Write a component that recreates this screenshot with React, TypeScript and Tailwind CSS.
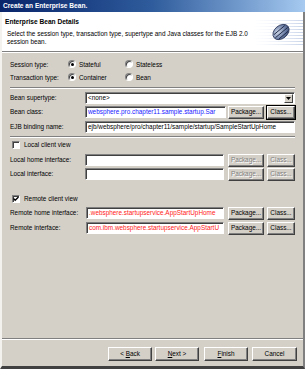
import React from "react";

type BtnProps = {
  children: React.ReactNode;
  className?: string;
  disabled?: boolean;
  focus?: boolean;
};

// classic win2k raised button
const Btn = ({ children, className = "", disabled, focus }: BtnProps) => (
  <div
    className={`flex items-center justify-center whitespace-nowrap bg-[#d4d0c8] border border-t-white border-l-white border-b-[#404040] border-r-[#404040] shadow-[inset_-1px_-1px_0_#808080] ${
      focus ? "outline outline-1 outline-[#000]" : ""
    } ${disabled ? "text-[#808080] [text-shadow:1px_1px_0_#fff]" : "text-black"} ${className}`}
  >
    {children}
  </div>
);

const Field = ({ value, className = "", color = "text-black" }: { value?: string; className?: string; color?: string }) => (
  <div
    className={`h-[12px] bg-white border border-t-[#808080] border-l-[#808080] border-b-white border-r-white shadow-[inset_1px_1px_0_#404040] overflow-hidden whitespace-nowrap leading-[10px] pl-[2px] ${color} ${className}`}
  >
    {value}
  </div>
);

const Radio = ({ checked }: { checked?: boolean }) => (
  <div className="w-[8px] h-[8px] rounded-full bg-white border border-t-[#808080] border-l-[#808080] border-b-white border-r-white shadow-[inset_1px_1px_0_#404040] flex items-center justify-center">
    {checked && <div className="w-[3px] h-[3px] rounded-full bg-black" />}
  </div>
);

const Check = ({ checked }: { checked?: boolean }) => (
  <div className="w-[8px] h-[8px] bg-white border border-t-[#808080] border-l-[#808080] border-b-white border-r-white shadow-[inset_1px_1px_0_#404040] flex items-center justify-center">
    {checked && (
      <svg width="6" height="6" viewBox="0 0 6 6">
        <path d="M0.5 2.5 L2.2 4.3 L5.5 1" stroke="#000" strokeWidth="1.3" fill="none" />
      </svg>
    )}
  </div>
);

const Sep = ({ className = "" }: { className?: string }) => (
  <div className={`h-[2px] border-t border-t-[#808080] border-b border-b-white ${className}`} />
);

const BeanIcon = () => (
  <svg width="50" height="28" viewBox="0 0 50 28">
    <defs>
      <linearGradient id="fade" x1="0" x2="1" y1="0" y2="0">
        <stop offset="0" stopColor="#e8eef8" stopOpacity="0" />
        <stop offset="1" stopColor="#c8d4ea" />
      </linearGradient>
      <radialGradient id="bean" cx="0.35" cy="0.35" r="0.8">
        <stop offset="0" stopColor="#d0d8e8" />
        <stop offset="0.6" stopColor="#6b7ea6" />
        <stop offset="1" stopColor="#2e3d63" />
      </radialGradient>
    </defs>
    {[2, 5, 8, 11, 14, 17, 20, 23, 26].map((y) => (
      <rect key={y} x="0" y={y} width="50" height="1" fill="url(#fade)" />
    ))}
    <g transform="translate(28 14) rotate(-40)">
      <ellipse cx="0" cy="0" rx="9" ry="6.5" fill="url(#bean)" stroke="#2a3558" strokeWidth="0.8" />
      <path d="M-7 -2.5 L7 -2.5 M-8 0.8 L8 0.8 M-6 4 L6 4" stroke="#1f2a48" strokeWidth="0.9" />
    </g>
  </svg>
);

export default function App() {
  return (
    <div className="w-[305px] h-[369px] bg-[#d4d0c8] flex flex-col font-['Liberation_Sans',Arial,sans-serif] text-[6.4px] text-black overflow-hidden">
      {/* title bar */}
      <div className="h-[12px] shrink-0 bg-gradient-to-r from-[#0a246a] via-[#2f5c9c] to-[#a6caf0] flex items-center pl-[3px]">
        <span className="text-white font-bold text-[6.6px]">Create an Enterprise Bean.</span>
      </div>

      <div className="flex-1 flex flex-col border-l-2 border-l-[#f4f2ee] border-r-2 border-r-[#808080] border-b-[3px] border-b-[#404040]">
        {/* banner */}
        <div className="h-[39px] shrink-0 bg-white flex items-start relative">
          <div className="flex-1 pl-[3px] pt-[6px]">
            <div className="font-bold text-[6.6px] leading-[8px]">Enterprise Bean Details</div>
            <div className="pl-[2px] mt-[4px] leading-[8px]">
              Select the session type, transaction type, supertype and Java classes for the EJB 2.0
              <br />
              session bean.
            </div>
          </div>
          <div className="absolute right-0 top-[6px]">
            <BeanIcon />
          </div>
        </div>
        <Sep />

        <div className="flex flex-col pl-[8px] pr-[8px]">
          <div className="flex items-center h-[13px] mt-[5px]">
            <div className="w-[58px]">Session type:</div>
            <div className="w-[57px] flex items-center gap-[3px]">
              <Radio checked />
              <span>Stateful</span>
            </div>
            <div className="flex items-center gap-[3px]">
              <Radio />
              <span>Stateless</span>
            </div>
          </div>
          <div className="flex items-center h-[13px]">
            <div className="w-[58px]">Transaction type:</div>
            <div className="w-[57px] flex items-center gap-[3px]">
              <Radio checked />
              <span>Container</span>
            </div>
            <div className="flex items-center gap-[3px]">
              <Radio />
              <span>Bean</span>
            </div>
          </div>

          <Sep className="mt-[3px]" />

          <div className="flex items-center h-[12px] mt-[3px]">
            <div className="w-[75px] shrink-0">Bean supertype:</div>
            <div className="flex-1 h-[12px] bg-white border border-t-[#808080] border-l-[#808080] border-b-white border-r-white shadow-[inset_1px_1px_0_#404040] flex items-center">
              <span className="flex-1 pl-[2px] leading-[10px]">&lt;none&gt;</span>
              <div className="w-[9px] h-[9px] mr-[1px] bg-[#d4d0c8] border border-t-white border-l-white border-b-[#404040] border-r-[#404040] flex items-center justify-center">
                <svg width="5" height="3" viewBox="0 0 5 3">
                  <path d="M0 0 L5 0 L2.5 3 Z" fill="#000" />
                </svg>
              </div>
            </div>
          </div>

          <div className="flex items-center h-[12px] mt-[2px]">
            <div className="w-[75px] shrink-0">Bean class:</div>
            <Field className="w-[141px]" color="text-[#2020ff]" value="websphere.pro.chapter11.sample.startup.Sar" />
            <Btn className="w-[36px] h-[13px] ml-[2px]">Package...</Btn>
            <Btn className="w-[28px] h-[13px] ml-[3px]" focus>
              Class...
            </Btn>
          </div>

          <div className="flex items-center h-[12px] mt-[3px]">
            <div className="w-[75px] shrink-0">EJB binding name:</div>
            <Field className="flex-1" value="ejb/websphere/pro/chapter11/sample/startup/SampleStartUpHome" />
          </div>

          <Sep className="mt-[3px]" />

          <div className="flex items-center h-[12px] mt-[1px] pl-[2px] gap-[4px]">
            <Check />
            <span>Local client view</span>
          </div>

          <div className="flex items-center h-[12px] mt-[3px]">
            <div className="w-[75px] shrink-0">Local home interface:</div>
            <Field className="w-[139px]" />
            <Btn className="w-[36px] h-[13px] ml-[4px]" disabled>
              Package...
            </Btn>
            <Btn className="w-[28px] h-[13px] ml-[3px]" disabled>
              Class...
            </Btn>
          </div>
          <div className="flex items-center h-[12px] mt-[2px]">
            <div className="w-[75px] shrink-0">Local interface:</div>
            <Field className="w-[139px]" />
            <Btn className="w-[36px] h-[13px] ml-[4px]" disabled>
              Package...
            </Btn>
            <Btn className="w-[28px] h-[13px] ml-[3px]" disabled>
              Class...
            </Btn>
          </div>

          <div className="flex items-center h-[12px] mt-[13px] pl-[2px] gap-[4px]">
            <Check checked />
            <span>Remote client view</span>
          </div>

          <div className="flex items-center h-[12px] mt-[2px]">
            <div className="w-[76px] shrink-0">Remote home interface:</div>
            <Field className="w-[138px]" color="text-[#ff2020]" value=".websphere.startupservice.AppStartUpHome" />
            <Btn className="w-[36px] h-[13px] ml-[4px]">Package...</Btn>
            <Btn className="w-[28px] h-[13px] ml-[3px]">Class...</Btn>
          </div>
          <div className="flex items-center h-[12px] mt-[3px]">
            <div className="w-[76px] shrink-0">Remote interface:</div>
            <Field className="w-[138px]" color="text-[#ff2020]" value="com.ibm.websphere.startupservice.AppStartU" />
            <Btn className="w-[36px] h-[13px] ml-[4px]">Package...</Btn>
            <Btn className="w-[28px] h-[13px] ml-[3px]">Class...</Btn>
          </div>
        </div>

        <div className="flex-1" />
        <Sep />
        <div className="flex justify-end items-center gap-[3px] pr-[6px] pt-[7px] pb-[5px]">
          <Btn className="w-[44px] h-[14px]">
            <span>
              &lt; <u>B</u>ack
            </span>
          </Btn>
          <Btn className="w-[44px] h-[14px] mr-[2px]">
            <span>
              <u>N</u>ext &gt;
            </span>
          </Btn>
          <Btn className="w-[44px] h-[14px] mr-[1px]">
            <span>
              <u>F</u>inish
            </span>
          </Btn>
          <Btn className="w-[45px] h-[14px]">Cancel</Btn>
        </div>
      </div>
    </div>
  );
}
